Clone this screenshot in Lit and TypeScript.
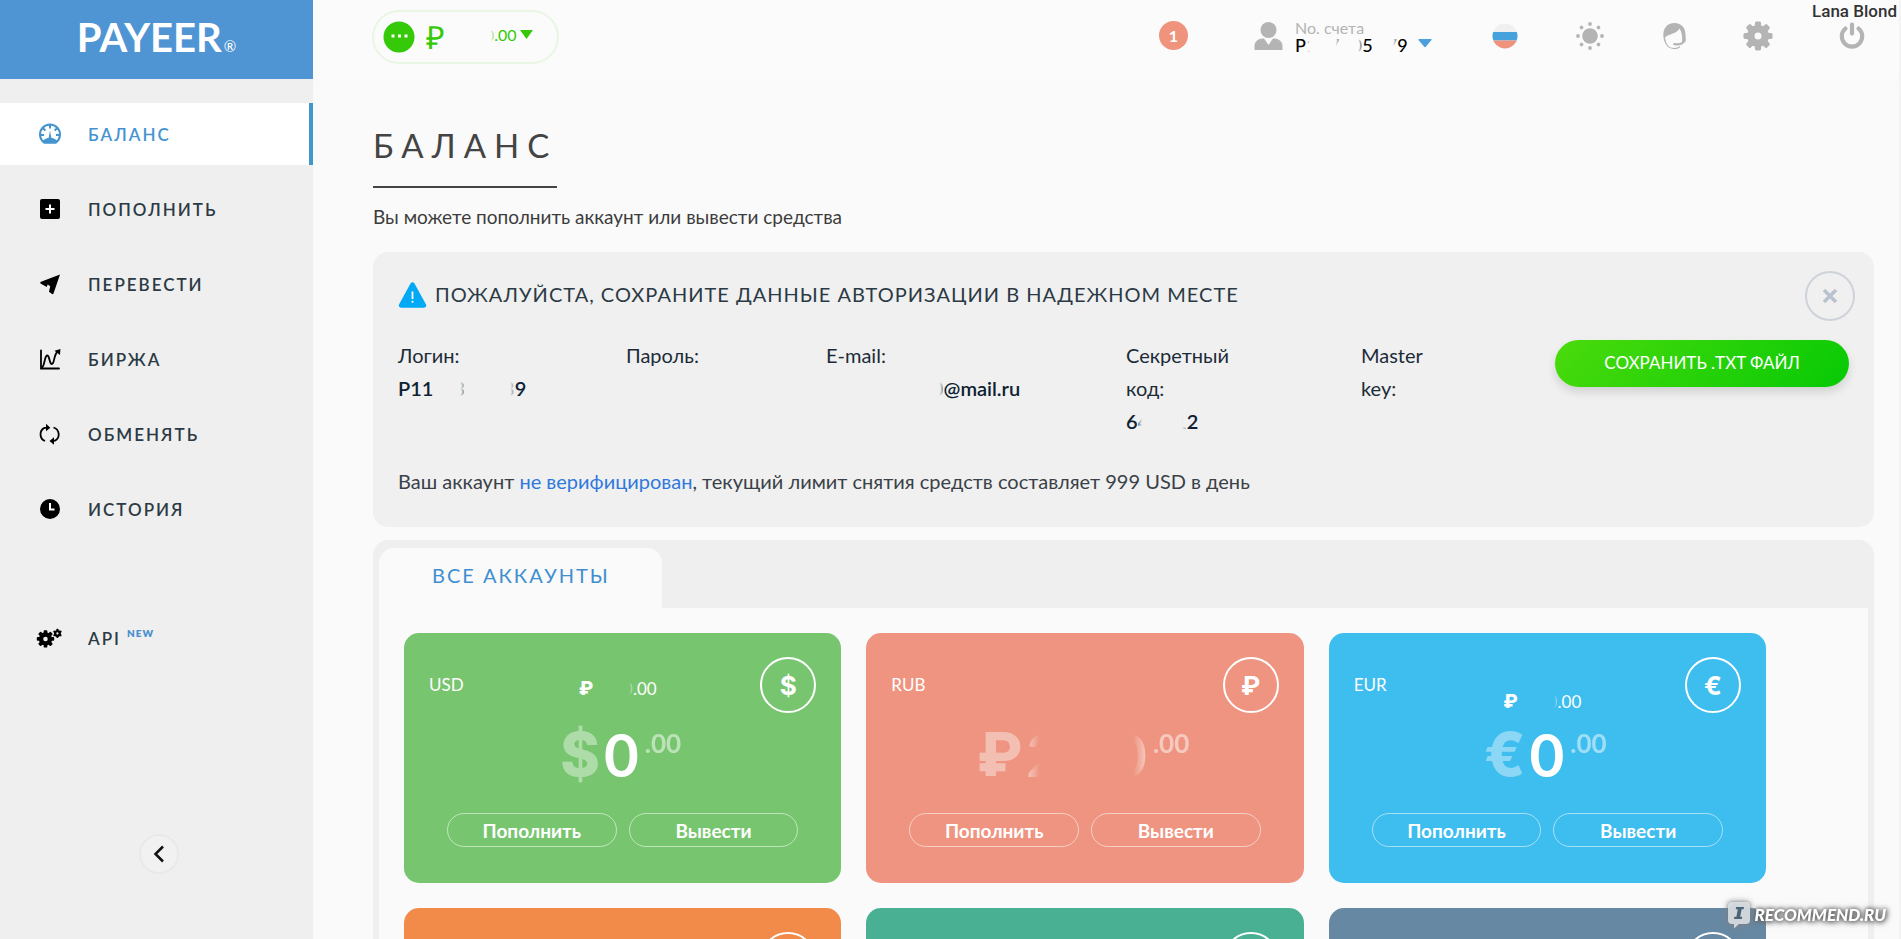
import { LitElement, html, svg, css, nothing, TemplateResult } from "lit";
import { customElement, property, state } from "lit/decorators.js";
import { classMap } from "lit/directives/class-map.js";
import { styleMap } from "lit/directives/style-map.js";

/** A masked value: plain text, a hidden stretch (px), or a glyph of which one side shows. */
type Part = string | number | { left: string } | { right: string };

const masked = (parts: Part[]) =>
  parts.map((p) => {
    if (typeof p === "string") return html`<span>${p}</span>`;
    if (typeof p === "number") return html`<span class="hid" style=${styleMap({ width: `${p}px` })}></span>`;
    return "left" in p
      ? html`<span class="cut cut-left">${p.left}</span>`
      : html`<span class="cut cut-right">${p.right}</span>`;
  });

const maskedStyles = css`
  .hid {
    display: inline-block;
  }
  .cut-left {
    -webkit-mask-image: linear-gradient(to right, #0008, #0002 30%, transparent 40%);
    mask-image: linear-gradient(to right, #0008, #0002 30%, transparent 40%);
  }
  .cut-right {
    -webkit-mask-image: linear-gradient(to left, #0008, #0002 30%, transparent 40%);
    mask-image: linear-gradient(to left, #0008, #0002 30%, transparent 40%);
  }
`;

const gear = (cx: number, cy: number, r: number, teeth: number, hole: number) => {
  const w = r * 0.42;
  return svg`<g>
    ${Array.from({ length: teeth }, (_, i) => svg`<rect x=${cx - w / 2} y=${cy - r} width=${w} height=${r * 0.5}
      rx=${r * 0.1} transform="rotate(${(360 / teeth) * i} ${cx} ${cy})"/>`)}
    <circle cx=${cx} cy=${cy} r=${(r * 0.76 + hole) / 2} fill="none" stroke="currentColor" stroke-width=${r * 0.76 - hole}/>
  </g>`;
};

const icons: Record<string, TemplateResult> = {
  gauge: html`<svg viewBox="0 0 24 24" width="24" height="24" fill="none" stroke="currentColor">
    <path d="M6 20.5a10 10 0 1 1 12 0z" stroke-width="2" stroke-linejoin="round"/>
    <path d="M12 2.5v4M4.6 6l2.8 2.6M19.4 6l-2.8 2.6M2 13h4M22 13h-4" stroke-width="2"/>
    <path d="M12 8.5l1.3 7.3c2.7.6 4.7 1.8 6.2 3.2L18 21.5H6L4.5 19c1.5-1.4 3.5-2.6 6.2-3.2z" fill="currentColor" stroke="none"/>
  </svg>`,
  plus: html`<svg viewBox="0 0 24 24" width="24" height="24">
    <rect x="2" y="2" width="20" height="20" rx="2" fill="#000"/>
    <path d="M12 7.5v9M7.5 12h9" stroke="#fff" stroke-width="2"/>
  </svg>`,
  send: html`<svg viewBox="0 0 24 24" width="24" height="24" fill="#000">
    <path d="M22 2.5 15.5 21.5Q15 22.6 14 22l-3-2.2 1.2-5.6-2.5-1.7-1 2.6L2.5 11.5Q1.5 10.4 3 9.7z"/>
  </svg>`,
  chart: html`<svg viewBox="0 0 24 24" width="24" height="24" fill="none" stroke="#000" stroke-width="1.8">
    <path d="M3 3.5v18h18" stroke-linecap="round"/>
    <path d="M4 20.5C7 18 6.5 8.5 9.2 8.5c2.8 0 1.8 8.5 4.6 8.5 3 0 1.2-8.5 6.2-13"/>
    <path d="M16.5 3.8 22.5 2l-.6 6z" fill="#000" stroke="none"/>
  </svg>`,
  cycle: html`<svg viewBox="0 0 24 24" width="24" height="24" fill="none" stroke="#000" stroke-width="1.8">
    <path d="M7 19A7.200 7.200 0 0 1 6.500 5.900h2M15.500 5.500a7.200 7.200 0 0 1 1.500 13.200h-1.500"/>
    <path d="M8 1.800 12.300 5.700 8 9.300zM16 22.700l-4.500-3.800 4.500-3.700z" fill="#000" stroke="none"/>
  </svg>`,
  clock: html`<svg viewBox="0 0 24 24" width="24" height="24">
    <circle cx="12" cy="12" r="10" fill="#000"/>
    <path d="M12 6v6.5h4.5" stroke="#fff" stroke-width="2" fill="none"/>
  </svg>`,
  gears: html`<svg viewBox="2 0 28 24" width="26" height="22" fill="currentColor" color="#000" overflow="visible">
    ${gear(10, 13, 9.5, 8, 2.5)}${gear(23, 7, 5, 6, 1.2)}
  </svg>`,
};

interface NavItem {
  icon: string;
  label: string;
  tag?: string;
}

@customElement("side-bar")
class SideBar extends LitElement {
  @state() active = 0;

  items: NavItem[] = [
    { icon: "gauge", label: "БАЛАНС" },
    { icon: "plus", label: "ПОПОЛНИТЬ" },
    { icon: "send", label: "ПЕРЕВЕСТИ" },
    { icon: "chart", label: "БИРЖА" },
    { icon: "cycle", label: "ОБМЕНЯТЬ" },
    { icon: "clock", label: "ИСТОРИЯ" },
    { icon: "gears", label: "API", tag: "NEW" },
  ];

  static styles = css`
    :host {
      display: flex;
      flex-direction: column;
      align-items: stretch;
      background: #efefef;
    }
    .logo {
      display: flex;
      align-items: baseline;
      justify-content: center;
      gap: 2px;
      height: 79px;
      line-height: 75px;
      background: #4f95d4;
      color: #fff;
      font-size: 40px;
      font-weight: 700;
      text-decoration: none;
    }
    .reg {
      font-size: 15px;
      line-height: 15px;
      font-weight: 400;
    }
    nav {
      display: flex;
      flex-direction: column;
      gap: 13px;
      padding-top: 24px;
    }
    .item {
      box-sizing: border-box;
      display: flex;
      align-items: center;
      height: 62px;
      padding-left: 38px;
      border-right: 4px solid transparent;
      color: #2b3a44;
      font-size: 17px;
      font-weight: 600;
      letter-spacing: 2px;
      text-decoration: none;
    }
    .item.active {
      background: #fff;
      color: #4494cf;
      border-right-color: #3f97cc;
    }
    .item.spaced {
      margin-top: 54px;
    }
    .icon {
      display: flex;
      width: 50px;
    }
    sup {
      align-self: flex-start;
      padding: 19px 0 0 6px;
      color: #4b8fd0;
      font-size: 10px;
      line-height: 14px;
      font-weight: 800;
      letter-spacing: 1px;
    }
    .collapse {
      display: flex;
      align-items: center;
      justify-content: center;
      align-self: center;
      width: 40px;
      height: 40px;
      margin: auto 0 65px 4px;
      padding: 0;
      border: 2px solid #e9e9e9;
      border-radius: 50%;
      box-sizing: border-box;
      background: #f1f1f1;
    }
  `;

  render() {
    return html`
      <a class="logo" href="#"><span>PAYEER</span><span class="reg">®</span></a>
      <nav>
        ${this.items.map(
          (it, i) => html`<a
            href="#"
            class=${classMap({ item: true, active: i === this.active, spaced: !!it.tag })}
            @click=${() => (this.active = i)}
            ><span class="icon">${icons[it.icon]}</span>${it.label}${it.tag ? html`<sup>${it.tag}</sup>` : nothing}</a
          >`
        )}
      </nav>
      <button class="collapse" aria-label="Свернуть меню">
        <svg viewBox="0 0 12 18" width="12" height="18" fill="none" stroke="#111" stroke-width="2.5">
          <path d="M10 1.5 2.5 9 10 16.5"/>
        </svg>
      </button>
    `;
  }
}

@customElement("top-bar")
class TopBar extends LitElement {
  static styles = [
    maskedStyles,
    css`
      :host {
        box-sizing: border-box;
        display: flex;
        justify-content: space-between;
        height: 79px;
        padding: 0 34px 0 59px;
        background: #fbfbfb;
        box-shadow: 0 8px 8px #f4f8f244;
      }
      button {
        padding: 0;
        border: 0;
        background: none;
        color: inherit;
        font: inherit;
      }
      .wallet {
        box-sizing: border-box;
        display: flex;
        align-items: center;
        height: 54px;
        width: 187px;
        margin-top: 10px;
        padding-left: 9px;
        border: 2px solid #e8f6e3;
        border-radius: 27px;
        color: #35c90a;
      }
      .dots {
        margin-right: 11px;
      }
      .rub {
        font-size: 32px;
        line-height: 34px;
      }
      .cents {
        align-self: flex-start;
        padding-top: 13px;
        font-size: 16px;
        line-height: 20px;
      }
      .down {
        align-self: flex-start;
        padding: 18px 0 0 2px;
      }
      .tools {
        display: flex;
        height: 71px;
        align-items: center;
        color: #b4b4b4;
      }
      .tools svg {
        display: block;
      }
      .badge {
        width: 29px;
        height: 29px;
        margin-right: 66px;
        border-radius: 50%;
        background: #f0937c;
        color: #fff;
        font-size: 16px;
        line-height: 29px;
        font-weight: 700;
      }
      .account {
        display: flex;
        align-items: center;
        gap: 12px;
        width: 178px;
        margin-right: 60px;
        text-align: left;
      }
      .number {
        width: 111px;
        font-size: 16px;
        line-height: 18px;
      }
      .id {
        display: block;
        color: #000;
        font-size: 18px;
        line-height: 16px;
        font-weight: 500;
        white-space: nowrap;
      }
      .caret {
        padding-top: 14px;
      }
      .flag,
      .theme {
        margin-right: 58px;
      }
      .help {
        margin-right: 56px;
      }
      .settings {
        margin-right: 66px;
      }
    `,
  ];

  render() {
    return html`
      <button class="wallet" aria-label="Кошелёк">
        <svg class="dots" width="32" height="32" viewBox="0 0 32 32">
          <circle cx="16" cy="16" r="15.5" fill="#35c90a"/>
          <path d="M8.5 13.5h3v3h-3zM15 13.5h3v3h-3zM21.5 13.5h3v3h-3z" fill="#fff"/>
        </svg>
        <span class="rub">₽</span>
        <span class="cents">${masked([40, { right: "0" }, ".00"])}</span>
        <svg class="down" width="15" height="9" viewBox="0 0 15 9"><path d="M1 0h13L7.5 9z" fill="#35c90a"/></svg>
      </button>
      <div class="tools">
        <button class="badge">1</button>
        <button class="account">
          <svg width="29" height="28" viewBox="0 0 29 28" fill="currentColor">
            <ellipse cx="14.5" cy="8" rx="8" ry="8"/>
            <path d="M.5 28v-4c0-4 3-7 8-7.5h1.5l4.5 6.5 4.5-6.5H20.5c5 .5 8 3.5 8 7.5v4z"/>
          </svg>
          <span class="number">No. счета<span class="id">${masked(["P", { left: "1" }, 13, { right: "7" }, 12, { right: "0" }, "5", 14, { right: "7" }, "9"])}</span></span>
          <svg class="caret" width="14" height="8" viewBox="0 0 14 8"><path d="M1 0h12q1 0 .5 1L8 7.4q-1 1-2 0L.5 1Q0 0 1 0z" fill="#4a9fdc"/></svg>
        </button>
        <button class="flag" aria-label="Язык">
          <svg width="26" height="26" viewBox="0 0 26 26">
            <clipPath id="disc"><circle cx="13" cy="13" r="12.5"/></clipPath>
            <g clip-path="url(#disc)">
              <path d="M0 0h26v9H0z" fill="#f0f0f0"/>
              <path d="M0 9h26v8.5H0z" fill="#46a2dd"/>
              <path d="M0 17.5h26V26H0z" fill="#f0937c"/>
            </g>
          </svg>
        </button>
        <button class="theme" aria-label="Тема">
          <svg width="28" height="28" viewBox="0 0 28 28" fill="currentColor">
            <circle cx="14" cy="14" r="7.8"/>
            ${[0, 45, 90, 135, 180, 225, 270, 315].map(
              (a) => svg`<circle cx="14" cy="2" r="1.9" transform="rotate(${a} 14 14)"/>`
            )}
          </svg>
        </button>
        <button class="help" aria-label="Поддержка">
          <svg width="25" height="28" viewBox="0 0 25 28">
            <path d="M1.5 15.5C.3 6 5.5 1 12.5 1 19.5 1 23.5 6 23.5 12.5l.3 5c.2 2-.8 3-2.3 3.5L20 20.5C20.5 15 20 10 17.5 6.500 14.5 11.5 9 11.5 4 14.5c-1 .8-1.2 3-1.2 5.5-.8-1.5-1.1-3-1.3-4.5z" fill="currentColor"/>
            <path d="M2.6 17C3.500 22.5 7 26.6 12 26.6c2.5 0 4.5-.6 6-1.8" fill="none" stroke="currentColor" stroke-width="1.4"/>
            <path d="M20.8 20.5c-1 2-4 2-8.5 1.7" fill="none" stroke="currentColor" stroke-width="2.2" stroke-linecap="round"/>
          </svg>
        </button>
        <button class="settings" aria-label="Настройки">
          <svg width="30" height="30" viewBox="0 0 30 30" fill="currentColor">${gear(15, 15, 14.5, 8, 3.5)}</svg>
        </button>
        <button aria-label="Выход">
          <svg width="26" height="27" viewBox="0 0 26 27" fill="none" stroke="currentColor" stroke-width="4.2" stroke-linecap="round">
            <path d="M13 2.6v9"/>
            <path d="M6.5 6.5a10.2 10.2 0 1 0 13 0"/>
          </svg>
        </button>
      </div>
    `;
  }
}

@customElement("auth-panel")
class AuthPanel extends LitElement {
  @state() closed = false;

  fields: { label: string; value: Part[] }[] = [
    { label: "Логин:", value: ["P11", 20, { right: "3" }, 38, { right: "3" }, "9"] },
    { label: "Пароль:", value: [] },
    { label: "E-mail:", value: [106, { right: "0" }, "@mail.ru"] },
    { label: "Секретный код:", value: ["6", { left: "4" }, 26, { right: "1" }, "2"] },
    { label: "Master key:", value: [] },
  ];

  static styles = [
    maskedStyles,
    css`
      :host {
        display: block;
        padding: 19px 25px 29px;
        border-radius: 15px;
        background: #f0f0f0;
        color: #1c2b38;
        font-size: 20px;
      }
      .head {
        display: flex;
        align-items: flex-start;
        gap: 8px;
      }
      .warn {
        margin-top: 11px;
      }
      h2 {
        flex: 1;
        margin: 0;
        padding-top: 9px;
        font-size: 20px;
        line-height: 28px;
        font-weight: 400;
        letter-spacing: 1px;
        color: #2b3a44;
      }
      .close {
        display: flex;
        align-items: center;
        justify-content: center;
        width: 50px;
        height: 50px;
        margin-right: -6px;
        padding: 0;
        border: 2px solid #ced3d9;
        border-radius: 50%;
        box-sizing: border-box;
        background: none;
      }
      .data {
        display: flex;
        align-items: flex-start;
        padding-top: 19px;
      }
      .fields {
        flex: 1;
        display: grid;
        grid-template-columns: minmax(0, 228fr) minmax(0, 200fr) minmax(0, 300fr) minmax(0, 235fr) minmax(0, 194fr);
      }
      dl {
        margin: 0;
        padding-right: 96px;
        line-height: 33px;
        white-space: nowrap;
      }
      dl.wrap {
        white-space: normal;
      }
      dt {
        margin-top: -1px;
      }
      dd {
        margin: 0;
        font-weight: 600;
        color: #0e2233;
        white-space: nowrap;
      }
      .save {
        flex: 0 0 294px;
        height: 47px;
        padding: 0 0 3px;
        border: 0;
        border-radius: 24px;
        background: linear-gradient(135deg, #4bdb0c, #06c905);
        box-shadow: 0 5px 10px #0002;
        color: #fff;
        font: inherit;
        font-size: 17px;
      }
      p {
        margin: 0;
        padding-top: 27px;
        line-height: 33px;
        color: #3a4148;
      }
      a {
        color: #2f78dc;
        text-decoration: none;
      }
    `,
  ];

  render() {
    return html`
      <div class="head">
        <svg class="warn" width="29" height="26" viewBox="0 0 29 26">
          <path d="M12.5 1.5q2-2.5 4 0L28 22.5q1 3-2 3.2H3q-3-.2-2-3.2z" fill="#03a9f4"/>
          <path d="M14.5 9.5v7.5M14.5 18.7v2" stroke="#fff" stroke-width="1.8"/>
        </svg>
        <h2>ПОЖАЛУЙСТА, СОХРАНИТЕ ДАННЫЕ АВТОРИЗАЦИИ В НАДЕЖНОМ МЕСТЕ</h2>
        <button class="close" aria-label="Закрыть" @click=${() => (this.closed = true)}>
          <svg width="16" height="16" viewBox="0 0 16 16" stroke="#b9c3cf" stroke-width="3.6"><path d="M2 2l12 12M14 2 2 14"/></svg>
        </button>
      </div>
      <div class="data">
        <div class="fields">
          ${this.fields.map(
            (f) => html`<dl class=${classMap({ wrap: f.label.includes(" ") })}>
              <dt>${f.label}</dt>
              <dd>${masked(f.value)}&nbsp;</dd>
            </dl>`
          )}
        </div>
        <button class="save">СОХРАНИТЬ .TXT ФАЙЛ</button>
      </div>
      <p>
        Ваш аккаунт <a href="#">не верифицирован</a>, текущий лимит снятия средств составляет 999 USD в день
      </p>
    `;
  }
}

interface Account {
  code: string;
  sign: string;
  color: string;
  total?: Part[];
  low?: boolean;
  amount: Part[];
}

@customElement("account-card")
class AccountCard extends LitElement {
  @property({ attribute: false }) account!: Account;

  static styles = [
    maskedStyles,
    css`
      :host {
        display: block;
        height: 250px;
      }
      .card {
        box-sizing: border-box;
        height: 100%;
        padding: 24px 25px 0;
        border-radius: 15px;
        color: #fff;
      }
      .top {
        display: grid;
        grid-template-columns: 56px 1fr 56px;
        align-items: center;
        height: 56px;
      }
      .code {
        font-size: 17px;
        line-height: 20px;
      }
      .total {
        display: flex;
        align-items: baseline;
        justify-content: center;
        gap: 6px;
        padding: 8px 10px 0 0;
        font-size: 17px;
        line-height: 20px;
        white-space: nowrap;
      }
      .total.low {
        padding-top: 34px;
      }
      .total b {
        font-family: Inter, sans-serif;
        font-size: 19px;
        font-weight: 800;
      }
      .coin {
        display: flex;
        align-items: center;
        justify-content: center;
        box-sizing: border-box;
        width: 56px;
        height: 56px;
        border: 2px solid #fff;
        border-radius: 50%;
        font-family: Inter, sans-serif;
        font-size: 26px;
        font-weight: 700;
      }
      .sum {
        display: flex;
        justify-content: center;
        height: 100px;
        padding-right: 4px;
        line-height: 83px;
        font-size: 60px;
        font-weight: 700;
        white-space: nowrap;
      }
      .sign {
        margin-right: 4px;
        font-family: Inter, sans-serif;
        font-weight: 800;
        opacity: 0.4;
      }
      .cents {
        margin-left: 6px;
        font-size: 26px;
        line-height: 61px;
        opacity: 0.5;
      }
      .actions {
        display: grid;
        grid-template-columns: 1fr 1fr;
        gap: 12px;
        padding: 0 18px;
      }
      .actions button {
        height: 34px;
        padding: 0;
        border: 1px solid #fff8;
        border-radius: 17px;
        background: none;
        color: #fff;
        font: inherit;
        font-size: 19px;
        font-weight: 700;
      }
    `,
  ];

  render() {
    const a = this.account;
    return html`<div class="card" style=${styleMap({ background: a.color })}>
      <div class="top">
        <span class="code">${a.code}</span>
        <span class=${classMap({ total: true, low: !!a.low })}>
          ${a.total ? html`<b>₽</b><span>${masked(a.total)}</span>` : nothing}
        </span>
        <span class="coin">${a.sign}</span>
      </div>
      ${a.code
        ? html`<div class="sum">
              <span class="sign">${a.sign}</span><span>${masked(a.amount)}</span><span class="cents">.00</span>
            </div>
            <div class="actions"><button>Пополнить</button><button>Вывести</button></div>`
        : nothing}
    </div>`;
  }
}

@customElement("accounts-panel")
class AccountsPanel extends LitElement {
  accounts: Account[] = [
    { code: "USD", sign: "$", color: "#78c570", total: [24, { right: "0" }, ".00"], amount: ["0"] },
    { code: "RUB", sign: "₽", color: "#ee9480", amount: [{ left: "2" }, 51, { right: "0" }] },
    { code: "EUR", sign: "€", color: "#3ebdef", total: [24, { right: "0" }, ".00"], low: true, amount: ["0"] },
    { code: "", sign: "", color: "#f28b49", amount: [] },
    { code: "", sign: "", color: "#4ab094", amount: [] },
    { code: "", sign: "", color: "#6688a3", amount: [] },
  ];

  static styles = css`
    :host {
      display: block;
      padding: 8px 6px 6px;
      border-radius: 15px;
      background: #efefef;
    }
    .tab {
      display: block;
      height: 60px;
      padding: 0 52px 6px 53px;
      border: 0;
      border-radius: 15px 15px 0 0;
      background: #fafafa;
      color: #3f8fd0;
      font: inherit;
      font-size: 20px;
      letter-spacing: 2px;
    }
    .cards {
      display: grid;
      grid-template-columns: repeat(3, 1fr);
      gap: 25px;
      padding: 25px 102px 25px 25px;
      background: #fafafa;
    }
  `;

  render() {
    return html`
      <button class="tab">ВСЕ АККАУНТЫ</button>
      <div class="cards">${this.accounts.map((a) => html`<account-card .account=${a}></account-card>`)}</div>
    `;
  }
}

@customElement("app-root")
class AppRoot extends LitElement {
  static styles = css`
    :host {
      display: grid;
      grid-template-columns: 313px minmax(0, 1fr);
      height: 100vh;
      overflow: hidden;
      background: #fafafa;
      color: #3c3c3c;
      font-family: Lato, "Open Sans", sans-serif;
    }
    .page {
      min-height: 0;
      overflow-y: auto;
      scrollbar-width: none;
      border-right: 2px solid #f4f4f4;
    }
    main {
      display: flex;
      flex-direction: column;
      padding: 44px 25px 25px 60px;
    }
    h1 {
      align-self: flex-start;
      margin: 0;
      padding-bottom: 19px;
      border-bottom: 2px solid #444;
      color: #444;
      font-size: 33px;
      line-height: 44px;
      font-weight: 400;
      letter-spacing: 8px;
    }
    .lead {
      margin: 0;
      padding: 16px 0 23px;
      font-size: 19px;
      line-height: 25px;
    }
    accounts-panel {
      margin-top: 13px;
    }
    .author {
      position: absolute;
      top: 1px;
      right: 4px;
      font: 500 17px/20px Roboto, sans-serif;
      color: #333;
    }
    .mark {
      position: absolute;
      right: 15px;
      bottom: 10px;
      display: flex;
      align-items: center;
      gap: 4px;
      color: #fff;
      font: italic 900 17px/28px Lato, sans-serif;
      text-shadow: 0 0 4px #555, 1px 1px 5px #666;
      filter: drop-shadow(0 0 3px #8888);
    }
    .bubble {
      display: block;
      filter: drop-shadow(0 0 2px #777);
    }
  `;

  render() {
    return html`
      <side-bar></side-bar>
      <div class="page">
        <top-bar></top-bar>
        <main>
          <h1>БАЛАНС</h1>
          <p class="lead">Вы можете пополнить аккаунт или вывести средства</p>
          <auth-panel></auth-panel>
          <accounts-panel></accounts-panel>
        </main>
      </div>
      <div class="author">Lana Blond</div>
      <div class="mark">
        <svg class="bubble" width="24" height="28" viewBox="0 0 24 28">
          <path d="M5 1h14q4 0 4 4v14q0 4-4 4h-7l-5 4.5V23H5q-4 0-4-4V5q0-4 4-4z" fill="#dfe5ea" fill-opacity="0.85"/>
          <path d="M9 6h8l-.4 2.2h-2l-1.4 7.6h2L14.8 18H7l.4-2.2h2l1.4-7.6h-2z" fill="#4c6478"/>
        </svg>
        <span>RECOMMEND.RU</span>
      </div>
    `;
  }
}
